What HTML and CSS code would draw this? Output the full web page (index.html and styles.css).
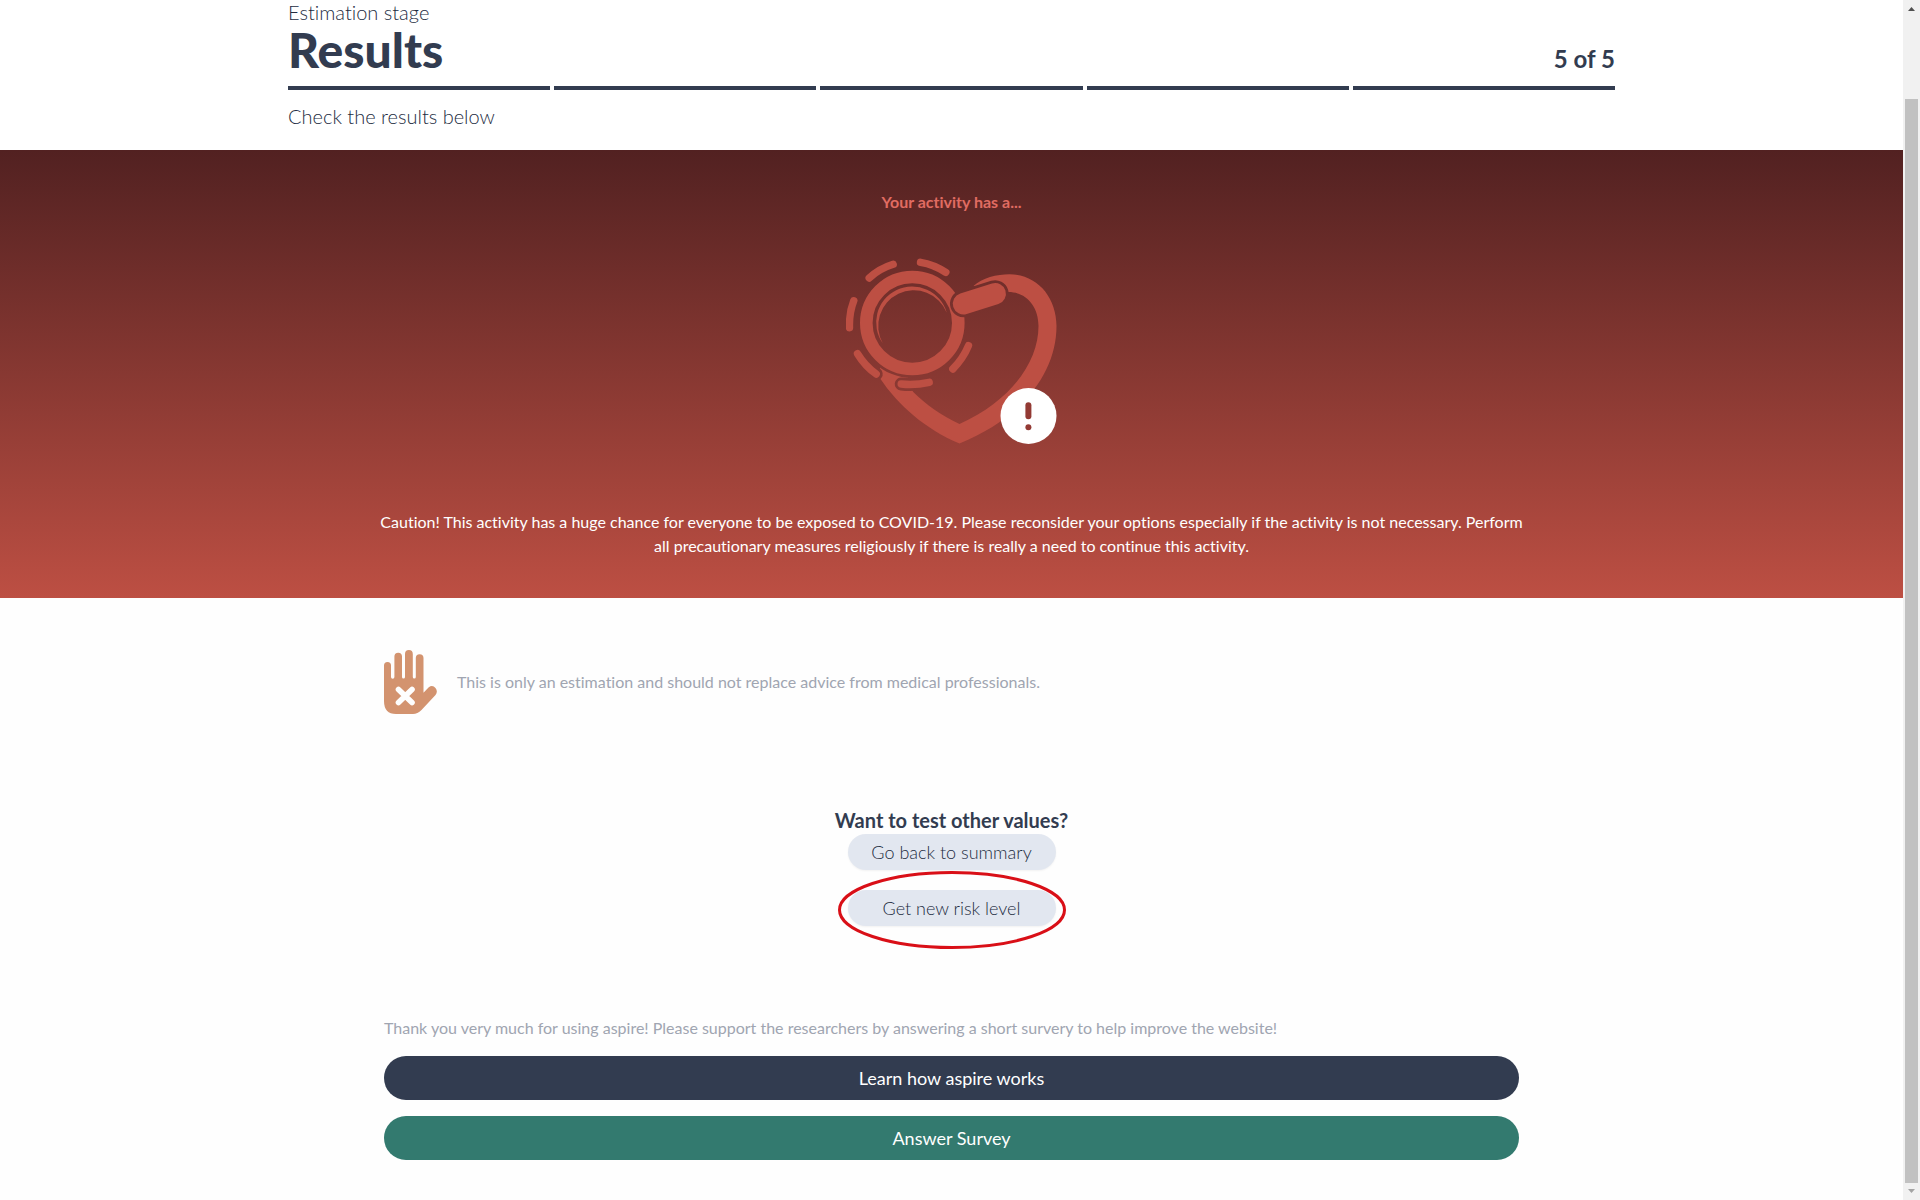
FILE: index.html
```html
<!DOCTYPE html>
<html lang="en">
<head>
<meta charset="utf-8">
<title>aspire – Results</title>
<link rel="stylesheet" href="styles.css">
</head>
<body>
<div class="page">
  <header class="stage">
    <p class="stage-label">Estimation stage</p>
    <div class="stage-row">
      <h1 class="stage-title">Results</h1>
      <p class="stage-count">5 of 5</p>
    </div>
    <div class="progress" aria-hidden="true"><span></span><span></span><span></span><span></span><span></span></div>
    <p class="stage-hint">Check the results below</p>
  </header>

  <section class="result">
    <h2 class="result-lead">Your activity has a...</h2>
    <svg class="result-icon" viewBox="1 0 212 188" role="img" aria-label="Very high risk">
      <defs>
        <mask id="behind-handle" maskUnits="userSpaceOnUse" x="0" y="0" width="214" height="188">
          <rect width="214" height="188" fill="#fff"/>
          <path d="M118.5 45.7L150.2 35.7" stroke="#000" stroke-width="27" stroke-linecap="round"/>
        </mask>
        <mask id="behind-lens" maskUnits="userSpaceOnUse" x="0" y="0" width="214" height="188">
          <rect width="214" height="188" fill="#fff"/>
          <circle cx="67.3" cy="65" r="55"/>
          <g fill="none" stroke="#000" stroke-width="13" stroke-linecap="round">
            <path d="M12.5 95.7Q20 108 31.2 116"/>
            <path d="M56.2 126Q70 127.5 84.2 124.3"/>
          </g>
        </mask>
      </defs>
      <g mask="url(#behind-handle)">
        <path mask="url(#behind-lens)" fill="#bd4f43" d="M128.5 28C137 20 152 16.3 164.5 16.3C192 16.3 211.5 39 211.5 68C211.5 115 177 160 114.5 185.5C80 171 53 147 35.5 121L35 108L62 116L68 133.7C80 146 97 158 114.5 166C165 143 193.5 105 193.5 68C193.5 48 181 34 163.5 34L150 36Z"/>
        <circle cx="67.3" cy="65" r="46" fill="none" stroke="#bd4f43" stroke-width="12.6"/>
      </g>
      <path fill="#bd4f43" d="M37.8 85.3A36 36 0 1 1 101.8 54.7A35.55 35.55 0 1 0 37.8 85.3Z"/>
      <g fill="none" stroke="#bd4f43" stroke-linecap="round">
        <path stroke-width="21.4" d="M118.5 45.7L150.2 35.7"/>
        <g stroke-width="7.4">
          <path d="M24.2 20Q34.5 10.5 48.2 6.3"/>
          <path d="M75.5 4.3Q89 6.5 100.8 14.3"/>
          <path d="M8.8 42.7Q4 55 4.5 69.7"/>
          <path d="M12.5 95.7Q20 108 31.2 116"/>
          <path d="M123.5 87.7Q118 101 107.8 111"/>
          <path d="M56.2 126Q70 127.5 84.2 124.3"/>
        </g>
      </g>
      <circle cx="183.5" cy="158" r="28" fill="#fff"/>
      <rect x="180.4" y="144.3" width="6" height="17" rx="3" fill="#933a34"/>
      <circle cx="183.4" cy="169.3" r="3" fill="#933a34"/>
    </svg>
    <p class="result-text">Caution! This activity has a huge chance for everyone to be exposed to COVID-19. Please reconsider your options especially if the activity is not necessary. Perform all precautionary measures religiously if there is really a need to continue this activity.</p>
  </section>

  <main class="content">
    <div class="notice">
      <svg class="notice-icon" viewBox="0 0 53 64" aria-hidden="true">
        <path fill="#d3936f" d="M0 15.5Q0 12 3.5 12Q7 12 7 15.5V27a1.7 1.7 0 0 0 3.4 0V6.5Q10.4 2.7 14.2 2.7Q18 2.7 18 6.5V27a1.5 1.5 0 0 0 3 0V4Q21 0 24.9 0Q28.800 0 28.800 4V27a1.500 1.500 0 0 0 3 0V8Q31.800 4.200 35.600 4.200Q39.500 4.200 39.500 8V42.700L44.500 37.500Q48.500 34.500 51.500 38Q54.200 41.500 51.500 45L37.500 60Q33.500 64 29 64H12Q0 64 0 51Z"/>
        <path fill="none" stroke="#fefefe" stroke-width="5.600" stroke-linecap="round" d="M14.500 39.500L28 52.500M28 39.500L14.500 52.500"/>
      </svg>
      <p>This is only an estimation and should not replace advice from medical professionals.</p>
    </div>
    <section class="retry">
      <h2 class="retry-title">Want to test other values?</h2>
      <button class="pill" type="button">Go back to summary</button>
      <div class="marked">
        <button class="pill" type="button">Get new risk level</button>
        <svg class="marked-ring" viewBox="0 0 228 78" aria-hidden="true"><ellipse cx="114" cy="39" rx="112.5" ry="37.5" fill="none" stroke="#d90f17" stroke-width="3"/></svg>
      </div>
    </section>
    <section class="survey">
      <p>Thank you very much for using aspire! Please support the researchers by answering a short survery to help improve the website!</p>
      <a class="action action-learn" href="#learn">Learn how aspire works</a>
      <a class="action action-survey" href="#survey">Answer Survey</a>
    </section>
  </main>
</div>
<div class="scrollbar" aria-hidden="true">
  <svg class="arrow" viewBox="0 0 17 17"><path fill="#505050" d="M5 11L8.500 7L12 11Z"/></svg>
  <div class="track"><div class="thumb"></div></div>
  <svg class="arrow" viewBox="0 0 17 17"><path fill="#a3a3a3" d="M5 6L8.500 10L12 6Z"/></svg>
</div>
</body>
</html>
```

FILE: styles.css
```css
* { box-sizing: border-box; margin: 0; }
body {
  display: flex;
  font: 16px/24px Lato, sans-serif;
  font-variant-ligatures: none;
  color: #323c50;
  background: #fefefe;
}
.page { flex: 1; min-width: 0; }

/* Stage header */
.stage { padding: 0 288px 20px; background: #fff; }
.stage-label, .stage-hint { font-size: 20px; font-weight: 300; color: #232c3f; }
.stage-label { line-height: 24px; }
.stage-hint { line-height: 28px; }
.stage-row { display: flex; justify-content: space-between; align-items: baseline; }
.stage-title { font-family: "Lato Black", Lato, sans-serif; font-size: 48px; line-height: 52px; font-weight: 900; }
.stage-count { font-size: 24px; line-height: 32px; font-weight: 700; }
.progress { display: flex; gap: 4px; margin: 10px 0 12px; }
.progress span { flex: 1; height: 4px; background: #323c50; }

/* Risk result */
.result { padding: 40px 374px; text-align: center; color: #fff; background: linear-gradient(#522121, #bd4f43); }
.result-lead { font-size: 16px; line-height: 24px; color: #e06c62; }
.result-icon { display: block; width: 212px; margin: 44px auto 64px; }

/* Page content */
.content { padding: 52px 384px 40px; }
.notice { display: flex; gap: 20px; align-items: center; color: #a0a5b1; }
.notice-icon { width: 53px; flex: none; }
.retry { display: flex; flex-direction: column; align-items: center; padding: 92px 0 90px; }
.retry-title { font-size: 20px; line-height: 28px; }
.pill {
  width: 208px;
  height: 36px;
  border: 0;
  border-radius: 18px;
  background: #e2e7f0;
  color: #232c3f;
  font: 300 18px/28px Lato, sans-serif;
  box-shadow: 0 1px 2px rgba(0, 0, 0, .05);
}
.marked { position: relative; display: flex; margin-top: 20px; }
.marked-ring { position: absolute; left: -10px; top: -19px; width: 228px; height: 78px; pointer-events: none; }
.survey { display: flex; flex-direction: column; gap: 16px; color: #a0a5b1; }
.action {
  height: 44px;
  border-radius: 22px;
  text-align: center;
  font-size: 18px;
  line-height: 44px;
  color: #fff;
  text-decoration: none;
}
.action-learn { background: #323c50; }
.action-survey { background: #337a6f; }

/* Scrollbar */
.scrollbar { position: sticky; top: 0; display: flex; flex-direction: column; flex: none; width: 17px; height: 100vh; background: #f1f1f1; }
.arrow { display: block; width: 17px; height: 17px; flex: none; }
.track { flex: 1; display: flex; flex-direction: column; justify-content: flex-end; padding: 0 2px; }
.thumb { height: 93%; background: #c1c1c1; }
```
